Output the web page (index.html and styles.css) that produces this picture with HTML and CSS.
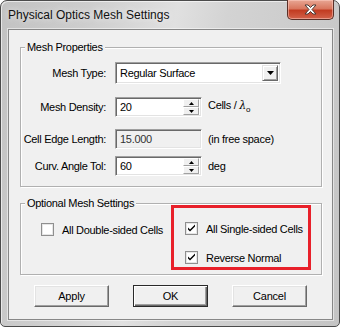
FILE: index.html
```html
<!DOCTYPE html>
<html lang="en">
<head>
  <meta charset="UTF-8">
  <title>Physical Optics Mesh Settings</title>
  <link rel="stylesheet" href="styles.css">
</head>
<body>
  <div class="window">
    <div class="titlebar">
      <span class="title">Physical Optics Mesh Settings</span>
      <div class="close">
        <svg width="17" height="11" viewBox="0 0 17 11">
          <path d="M3 1h3l2.5 2.5L11 1h3l-4 4.5 4 4.5h-3L8.5 7.5 6 10H3l4-4.5z" fill="#fff" stroke="#4a3a36" stroke-width="1"/>
        </svg>
      </div>
    </div>

    <div class="client">
      <fieldset class="group props">
        <legend>Mesh Properties</legend>

        <div class="row row-type">
          <label>Mesh Type:</label>
          <div class="field combo">
            <span class="val">Regular Surface</span>
            <span class="drop">
              <svg width="7" height="4" viewBox="0 0 7 4"><path d="M0 0h7L3.5 4z" fill="#000"/></svg>
            </span>
          </div>
        </div>

        <div class="row row-density">
          <label>Mesh Density:</label>
          <div class="field spin">
            <span class="val">20</span>
            <span class="spinbtns">
              <b><svg width="5" height="3" viewBox="0 0 5 3"><path d="M2.5 0L5 3H0z" fill="#000"/></svg></b>
              <b><svg width="5" height="3" viewBox="0 0 5 3"><path d="M0 0h5L2.5 3z" fill="#000"/></svg></b>
            </span>
          </div>
          <span class="unit">Cells / <span class="lambda">λ</span><sub>o</sub></span>
        </div>

        <div class="row row-edge">
          <label>Cell Edge Length:</label>
          <div class="field readonly">
            <span class="val">15.000</span>
          </div>
          <span class="unit">(in free space)</span>
        </div>

        <div class="row row-curv">
          <label>Curv. Angle Tol:</label>
          <div class="field spin">
            <span class="val">60</span>
            <span class="spinbtns">
              <b><svg width="5" height="3" viewBox="0 0 5 3"><path d="M2.5 0L5 3H0z" fill="#000"/></svg></b>
              <b><svg width="5" height="3" viewBox="0 0 5 3"><path d="M0 0h5L2.5 3z" fill="#000"/></svg></b>
            </span>
          </div>
          <span class="unit">deg</span>
        </div>
      </fieldset>

      <fieldset class="group opts">
        <legend>Optional Mesh Settings</legend>
        <div class="opts-body">
          <div class="check check-double">
            <svg class="box" width="13" height="13" viewBox="0 0 13 13">
              <rect x="0.5" y="0.5" width="12" height="12" fill="#fff" stroke="#8f8f8f"/>
              <rect x="1.5" y="1.5" width="10" height="10" fill="none" stroke="#e6e6e6"/>
            </svg>
            <span>All Double-sided Cells</span>
          </div>
          <div class="highlight">
            <div class="check">
              <svg class="box" width="13" height="13" viewBox="0 0 13 13">
                <rect x="0.5" y="0.5" width="12" height="12" fill="#fff" stroke="#8f8f8f"/>
                <rect x="1.5" y="1.5" width="10" height="10" fill="none" stroke="#e6e6e6"/>
                <path d="M3 5.5l2 2 5-5v2l-5 5-2-2z" fill="#000"/>
              </svg>
              <span>All Single-sided Cells</span>
            </div>
            <div class="check">
              <svg class="box" width="13" height="13" viewBox="0 0 13 13">
                <rect x="0.5" y="0.5" width="12" height="12" fill="#fff" stroke="#8f8f8f"/>
                <rect x="1.5" y="1.5" width="10" height="10" fill="none" stroke="#e6e6e6"/>
                <path d="M3 5.5l2 2 5-5v2l-5 5-2-2z" fill="#000"/>
              </svg>
              <span>Reverse Normal</span>
            </div>
          </div>
        </div>
      </fieldset>

      <div class="buttons">
        <button class="btn">Apply</button>
        <button class="btn default">OK</button>
        <button class="btn">Cancel</button>
      </div>
    </div>
  </div>
</body>
</html>
```

FILE: styles.css
```css
body {
  margin: 0;
  background: #ffffff;
  font-family: "Liberation Sans", Arial, sans-serif;
  font-size: 11px;
  letter-spacing: -0.3px;
  white-space: nowrap;
  color: #000;
}
.window {
  width: 340px;
  height: 327px;
  box-sizing: border-box;
  border: 1px solid #4b4b4b;
  border-radius: 7px 7px 5px 5px;
  padding: 0 6px 6px 7px;
  background: linear-gradient(100deg, #c2c2c2 0%, #cdcdcd 22%, #e0e0e0 45%, #d3d3d3 58%, #c4c4c4 100%);
  box-shadow: inset 1px 1px 0 rgba(255, 255, 255, 0.6);
}
.titlebar {
  display: flex;
  justify-content: space-between;
  align-items: flex-start;
  height: 28px;
  margin: 0 -6px 0 -7px;
  padding-left: 7px;
}
.title {
  font-size: 12px;
  letter-spacing: 0;
  margin-top: 7px;
  color: #111;
  text-shadow: 0 0 6px rgba(255, 255, 255, 0.9);
}
.close {
  width: 47px;
  height: 20px;
  box-sizing: border-box;
  margin: -1px 5px 0 0;
  border: 1px solid #5a3028;
  border-top: none;
  border-radius: 0 0 5px 5px;
  background: linear-gradient(#e8a694 0%, #d9775f 45%, #c23c22 55%, #d2624a 100%);
  box-shadow: inset 0 0 0 1px rgba(255, 210, 200, 0.5);
  display: flex;
  align-items: center;
  justify-content: center;
}
.client {
  height: 291px;
  box-sizing: border-box;
  border: 1px solid #878787;
  background: #f0f0f0;
  box-shadow: 0 0 0 1px rgba(255, 255, 255, 0.5);
  padding: 0 0 0 11px;
}
.group {
  margin: 0;
  padding: 0;
  width: 302px;
  box-sizing: border-box;
  border: 1px solid #b0b0b0;
  box-shadow: 1px 1px 0 #fff, inset 1px 1px 0 #fff;
}
.group legend {
  margin-left: 4px;
  padding: 0 2px;
  line-height: 13px;
  background: #f0f0f0;
}
.props {
  margin-top: 11px;
  padding-bottom: 10px;
}
.row {
  display: flex;
  align-items: center;
}
.row label {
  width: 85px;
  margin-right: 9px;
  text-align: right;
}
.row-type { margin-top: 8px; }
.row-density { margin-top: 13px; }
.row-edge { margin-top: 12px; }
.row-curv { margin-top: 7px; }
.field {
  box-sizing: border-box;
  height: 20px;
  width: 87px;
  border: 1px solid;
  border-color: #a0a0a0 #fff #fff #a0a0a0;
  box-shadow: inset 1px 1px 0 #696969, inset -1px -1px 0 #e3e3e3;
  background: #fff;
  display: flex;
  align-items: center;
  justify-content: space-between;
}
.field .val {
  padding-left: 4px;
}
.combo {
  width: 166px;
  height: 22px;
}
.readonly {
  background: #f0f0f0;
}
.readonly .val {
  color: #333;
}
.drop {
  width: 16px;
  height: 16px;
  margin-right: 2px;
  box-sizing: border-box;
  border: 1px solid;
  border-color: #e3e3e3 #696969 #696969 #e3e3e3;
  box-shadow: inset 1px 1px 0 #fff, inset -1px -1px 0 #a0a0a0;
  background: #f0f0f0;
  display: flex;
  align-items: center;
  justify-content: center;
}
.spinbtns {
  display: flex;
  flex-direction: column;
  margin-right: 2px;
}
.spinbtns b {
  width: 16px;
  height: 8px;
  box-sizing: border-box;
  border: 1px solid;
  border-color: #fff #a0a0a0 #a0a0a0 #fff;
  background: #f0f0f0;
  display: flex;
  align-items: center;
  justify-content: center;
}
.unit {
  margin-left: 6px;
}
.lambda {
  font-family: "DejaVu Serif", serif;
  font-style: italic;
}
.unit sub {
  font-size: 8px;
}
.opts {
  margin-top: 10px;
  padding-bottom: 4px;
}
.opts-body {
  display: flex;
  align-items: flex-start;
}
.check {
  display: flex;
  align-items: center;
  height: 13px;
}
.check .box {
  margin-right: 8px;
  flex: none;
}
.check-double {
  margin: 13px 0 0 20px;
  width: 130px;
}
.highlight {
  margin: -5px 0 0 0;
  width: 140px;
  box-sizing: border-box;
  border: 3px solid #e8202a;
  padding: 14px 0 3px 11px;
  display: flex;
  flex-direction: column;
  gap: 16px;
}
.buttons {
  display: flex;
  gap: 24px;
  margin-top: 10px;
  padding-left: 14px;
}
.btn {
  width: 75px;
  height: 22px;
  box-sizing: border-box;
  font-family: "Liberation Sans", Arial, sans-serif;
  font-size: 11px;
  letter-spacing: -0.2px;
  color: #000;
  background: #f0f0f0;
  border: 1px solid;
  border-color: #fff #696969 #696969 #fff;
  box-shadow: inset -1px -1px 0 #a0a0a0, inset 1px 1px 0 #e3e3e3;
  padding: 0;
}
.btn.default {
  border: 1px solid #2a2a2a;
  box-shadow: inset 1px 1px 0 #fff, inset -1px -1px 0 #696969, inset -2px -2px 0 #a0a0a0;
}
```
